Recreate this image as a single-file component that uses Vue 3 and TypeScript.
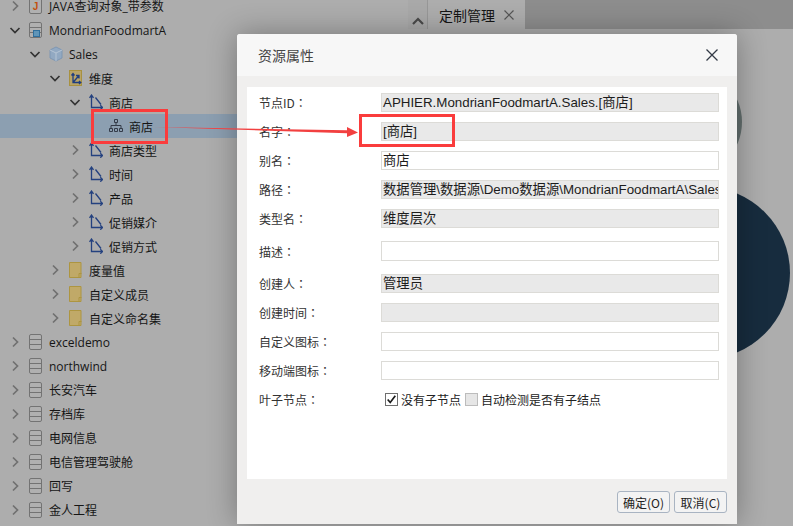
<script setup lang="ts">
type Kind = 'java' | 'dbsel' | 'cube' | 'dimbox' | 'dim' | 'hier' | 'folder' | 'db'
interface Node { depth: number; kind: Kind; label: string; open?: boolean; leaf?: boolean; selected?: boolean }
const nodes: Node[] = [
  { depth: 0, kind: 'java', label: 'JAVA查询对象_带参数' },
  { depth: 0, kind: 'dbsel', label: 'MondrianFoodmartA', open: true },
  { depth: 1, kind: 'cube', label: 'Sales', open: true },
  { depth: 2, kind: 'dimbox', label: '维度', open: true },
  { depth: 3, kind: 'dim', label: '商店', open: true },
  { depth: 4, kind: 'hier', label: '商店', leaf: true, selected: true },
  { depth: 3, kind: 'dim', label: '商店类型' },
  { depth: 3, kind: 'dim', label: '时间' },
  { depth: 3, kind: 'dim', label: '产品' },
  { depth: 3, kind: 'dim', label: '促销媒介' },
  { depth: 3, kind: 'dim', label: '促销方式' },
  { depth: 2, kind: 'folder', label: '度量值' },
  { depth: 2, kind: 'folder', label: '自定义成员' },
  { depth: 2, kind: 'folder', label: '自定义命名集' },
  { depth: 0, kind: 'db', label: 'exceldemo' },
  { depth: 0, kind: 'db', label: 'northwind' },
  { depth: 0, kind: 'db', label: '长安汽车' },
  { depth: 0, kind: 'db', label: '存档库' },
  { depth: 0, kind: 'db', label: '电网信息' },
  { depth: 0, kind: 'db', label: '电信管理驾驶舱' },
  { depth: 0, kind: 'db', label: '回写' },
  { depth: 0, kind: 'db', label: '金人工程' },
  { depth: 0, kind: 'db', label: '' },
]
interface Field { label: string; value: string; ro: boolean; cls?: string }
const fields: Field[] = [
  { label: '节点ID', value: 'APHIER.MondrianFoodmartA.Sales.[商店]', ro: true },
  { label: '名字', value: '[商店]', ro: true },
  { label: '别名', value: '商店', ro: false },
  { label: '路径', value: '数据管理\\数据源\\Demo数据源\\MondrianFoodmartA\\Sales\\维度\\商店', ro: true },
  { label: '类型名', value: '维度层次', ro: true },
  { label: '描述', value: '', ro: false, cls: 'tall' },
  { label: '创建人', value: '管理员', ro: true },
  { label: '创建时间', value: '', ro: true },
  { label: '自定义图标', value: '', ro: false },
  { label: '移动端图标', value: '', ro: false },
]
</script>

<template>
  <div class="page">
    <aside class="tree">
      <div
        v-for="(n, i) in nodes"
        :key="i"
        class="row"
        :class="{ selected: n.selected }"
        :style="{ paddingLeft: n.depth * 20 + 9 + 'px' }"
      >
        <svg class="chev" viewBox="0 0 12 12" width="12" height="12">
          <path v-if="n.open" d="M1.5 4 6 8.5 10.5 4" class="open" />
          <path v-else-if="!n.leaf" d="M4 1.5 8.5 6 4 10.5" class="closed" />
        </svg>
        <svg class="ico" viewBox="0 0 14 16" width="14" height="16">
          <template v-if="n.kind === 'db' || n.kind === 'dbsel' || n.kind === 'java'">
            <rect x="0.5" y="0.5" width="12" height="15" rx="1.5" fill="#b0b0b0" stroke="#737373" />
            <template v-if="n.kind !== 'java'">
              <path d="M1 5.5h11M1 10.5h11" stroke="#737373" fill="none" />
            </template>
            <rect v-if="n.kind === 'dbsel'" x="4.5" y="8.5" width="6" height="6" fill="#5f95b8" stroke="#2f6f9c" />
            <text v-if="n.kind === 'java'" x="6.5" y="11.5" class="j">J</text>
          </template>
          <template v-else-if="n.kind === 'cube'">
            <path d="M7 1 13 4v8l-6 3-6-3V4z" fill="#92a9c2" stroke="#7f97b3" />
            <path d="M1 4l6 3 6-3M7 7v8" fill="none" stroke="#b5c4d4" />
          </template>
          <template v-else-if="n.kind === 'dimbox'">
            <rect x="0.5" y="0.5" width="12" height="15" fill="#b8a468" stroke="#a8913f" />
            <path d="M4 4v8.500h7.500M4 12.500 10 5.500M7 5.500h3v3M2.500 5.500 4 3.500l1.500 2M10 11l1.800 1.500L10 14" fill="none" stroke="#1f3e80" stroke-width="1.300" />
          </template>
          <template v-else-if="n.kind === 'dim'">
            <path d="M2.500 1.500v12h11M6.500 3.500 12 10.500M.5 3.800 2.500 1l2 2.800M11.300 11.300l2.400 2.200-2.400 2.200" fill="none" stroke="#24417f" stroke-width="1.300" />
          </template>
          <template v-else-if="n.kind === 'hier'">
            <path d="M5.500 1.500h3v3h-3zM.5 10.500h3v3h-3zM5.500 10.500h3v3h-3zM10.500 10.500h3v3h-3zM7 4.500v3M2 10.500v-3h10v3" fill="none" stroke="#343c4a" />
          </template>
          <template v-else>
            <path d="M.5.5h11.500v15H.5z" fill="#c0a968" stroke="#ad9540" />
            <path d="M10 15.500v-4h2.500" fill="none" stroke="#ad9540" />
          </template>
        </svg>
        <span class="label" :class="{ latin: n.depth < 2 }">{{ n.label }}</span>
      </div>
    </aside>

    <main class="main">
      <div class="tabbar">
        <div class="collapse">
          <svg viewBox="0 0 12 8" width="12" height="8"><path d="M1 7 6 2l5 5" fill="none" stroke="#4a4a4a" stroke-width="2.200" /></svg>
        </div>
        <div class="tab">
          <span>定制管理</span>
          <svg viewBox="0 0 10 10" width="10" height="10"><path d="M.5.5l9 9M9.500.5l-9 9" stroke="#555" stroke-width="1.200" /></svg>
        </div>
      </div>
      <div class="canvas">
        <div class="disc disc-grey"></div>
        <div class="disc disc-navy"></div>
      </div>
    </main>

    <section class="dialog">
      <header class="head">
        <span class="title">资源属性</span>
        <svg class="close" viewBox="0 0 12 12" width="12" height="12"><path d="M.5.5l11 11M11.500.5l-11 11" stroke="#333a46" stroke-width="1.300" /></svg>
      </header>
      <div class="body">
        <div class="panel">
          <div v-for="f in fields" :key="f.label" class="frow" :class="f.cls">
            <span class="flabel">{{ f.label }}<span class="colon">：</span></span>
            <div class="field" :class="{ ro: f.ro }">{{ f.value }}</div>
          </div>
          <div class="frow">
            <span class="flabel">叶子节点<span class="colon">：</span></span>
            <div class="checks">
              <span class="box on">
                <svg viewBox="0 0 13 13" width="11" height="11"><path d="M2 6.500l3 3.500 6-8" fill="none" stroke="#1a1a1a" stroke-width="2" /></svg>
              </span>
              <span class="ctext">没有子节点</span>
              <span class="box off"></span>
              <span class="ctext">自动检测是否有子结点</span>
            </div>
          </div>
        </div>
        <footer class="foot">
          <button class="btn">确定(O)</button>
          <button class="btn">取消(C)</button>
        </footer>
      </div>
    </section>

    <div class="mark mark-a"></div>
    <div class="mark mark-b"></div>
    <svg class="arrow" viewBox="0 0 793 526" width="793" height="526">
      <polygon points="155,127 347,130.300 347,127 358,132.500 347,137 347,133.300" fill="#f24040" />
    </svg>
  </div>
</template>

<style scoped>
.page {
  position: relative;
  width: 793px;
  height: 526px;
  overflow: hidden;
  display: flex;
  background: #adadad;
  font-family: "Noto Sans CJK SC", "Noto Sans", sans-serif;
  font-size: 12px;
  color: #151515;
}
.tree {
  width: 408px;
  flex: none;
  margin-top: -6px;
}
.row {
  height: 24px;
  display: flex;
  align-items: center;
  box-sizing: border-box;
  padding-top: 2px;
}
.row.selected { background: #8c9fb1; }
.chev { flex: none; margin-right: 8px; margin-bottom: 2px; }
.chev path { fill: none; }
.chev .open { stroke: #333; stroke-width: 1.700; }
.chev .closed { stroke: #707070; stroke-width: 1.700; }
.ico { flex: none; margin-right: 6px; margin-bottom: 2px; }
.j { font: bold 10px "Liberation Sans", sans-serif; fill: #c2500f; text-anchor: middle; }
.label { white-space: nowrap; line-height: 12px; }
.label.latin { font-family: "Open Sans", "Noto Sans CJK SC", sans-serif; }
.main { flex: 1; display: flex; flex-direction: column; }
.tabbar {
  height: 29px;
  display: flex;
  background: #8d8d8d;
}
.collapse {
  width: 20px;
  background: #a9a9a9;
  display: flex;
  align-items: center;
  justify-content: center;
  padding-top: 13px;
  box-sizing: border-box;
  border-right: 1px solid #979797;
}
.tab {
  width: 97px;
  background: #adadad;
  display: flex;
  align-items: center;
  box-sizing: border-box;
  padding: 0 0 0 11px;
  gap: 9px;
  font-size: 14px;
}
.canvas { flex: 1; position: relative; }
.disc { position: absolute; border-radius: 50%; }
.disc-grey {
  left: 226px;
  top: 39px;
  width: 108px;
  height: 108px;
  background: #636f6e;
}
.disc-navy {
  left: 210px;
  top: 158px;
  width: 172px;
  height: 172px;
  background: #172c3e;
}
.dialog {
  position: absolute;
  left: 237px;
  top: 34px;
  width: 500px;
  height: 490px;
  display: flex;
  flex-direction: column;
  background: #f0efee;
  border-radius: 3px 3px 0 0;
  box-shadow: 0 0 30px rgba(0, 0, 0, 0.32);
}
.head {
  height: 42px;
  flex: none;
  background: #f7f7f7;
  border-radius: 3px 3px 0 0;
  display: flex;
  align-items: center;
  justify-content: space-between;
  padding: 0 19px 0 21px;
  box-sizing: border-box;
}
.title { font-size: 14px; color: #444; }
.body {
  flex: 1;
  display: flex;
  flex-direction: column;
  padding: 11px 10px 11px;
  box-sizing: border-box;
}
.panel {
  height: 392px;
  background: #fff;
  box-sizing: border-box;
  padding-top: 6px;
}
.frow {
  display: flex;
  align-items: center;
  height: 19px;
  margin-bottom: 10px;
  padding-left: 12px;
}
.frow.tall { height: 20px; margin-top: 13px; margin-bottom: 13px; }
.flabel { width: 122px; flex: none; color: #333; }
.colon { font-family: "Noto Sans CJK TC", sans-serif; }
.field {
  width: 338px;
  height: 100%;
  box-sizing: border-box;
  border: 1px solid #dcdbd7;
  background: #fff;
  padding: 0 1px;
  font-family: "Liberation Sans", "Noto Sans CJK SC", sans-serif;
  font-size: 13.33px;
  line-height: 17px;
  white-space: nowrap;
  overflow: hidden;
  color: #1c1c1c;
}
.field.ro { background: #e9e9e9; }
.checks { display: flex; align-items: center; padding-left: 4px; }
.box {
  width: 13px;
  height: 13px;
  box-sizing: border-box;
  display: flex;
  align-items: center;
  justify-content: center;
}
.box.on { border: 1px solid #6f6f6f; background: #fff; }
.box.off { border: 1px solid #bcbcbc; background: #e6e6e6; margin-left: 4px; }
.ctext { margin-left: 3px; color: #222; }
.foot {
  flex: 1;
  display: flex;
  justify-content: flex-end;
  align-items: flex-end;
  gap: 4px;
}
.btn {
  height: 22px;
  width: 53px;
  padding: 0;
  box-sizing: border-box;
  border: 1px solid #a9b4c2;
  border-radius: 3px;
  background: #f3f3f3;
  font: 12px "Noto Sans CJK SC", sans-serif;
  color: #222;
}
.mark {
  position: absolute;
  box-sizing: border-box;
  border: 3px solid #fa3c3c;
}
.mark-a { left: 91px; top: 109px; width: 77px; height: 35px; }
.mark-b { left: 359px; top: 114px; width: 96px; height: 33px; }
.arrow { position: absolute; left: 0; top: 0; pointer-events: none; }
</style>

<style>
html, body { margin: 0; overflow: hidden; }
</style>
